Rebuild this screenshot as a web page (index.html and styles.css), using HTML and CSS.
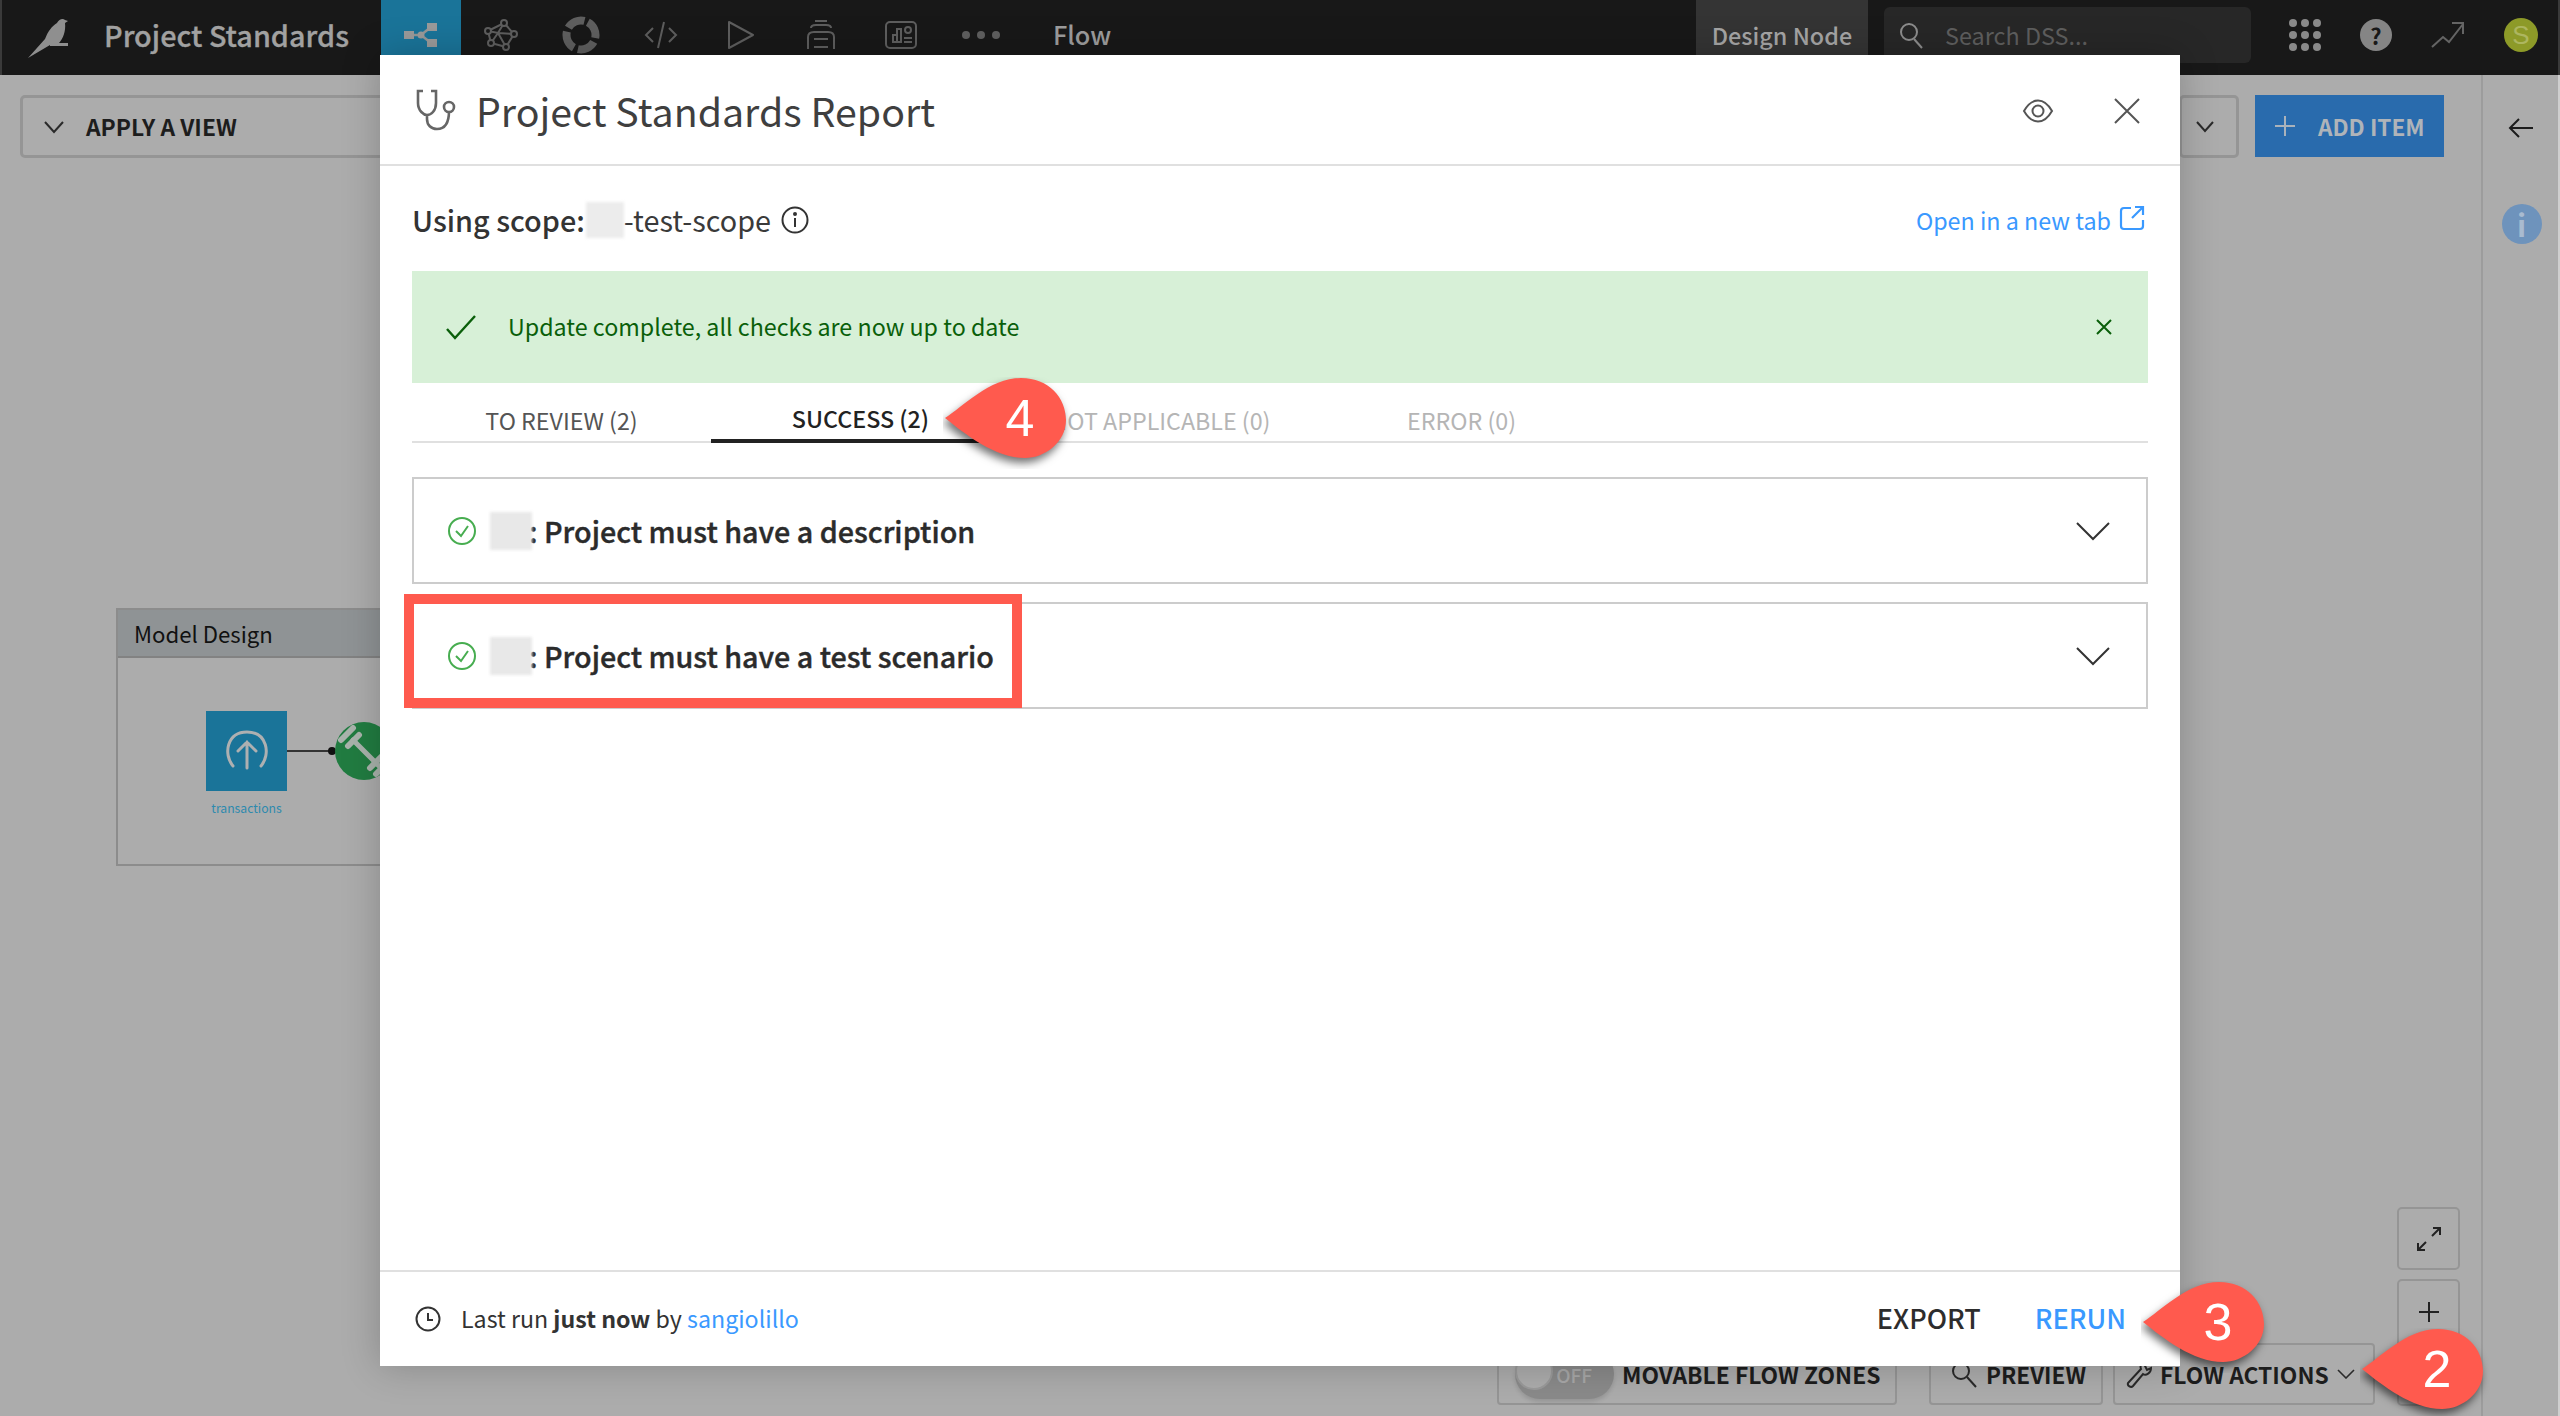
FILE: index.html
```html
<!DOCTYPE html>
<html lang="en">
<head>
<meta charset="utf-8">
<title>Project Standards</title>
<link rel="stylesheet" href="styles.css">
</head>
<body>
<div class="app">
  <header class="topbar">
    <div class="brand">
      <svg class="bird" width="44" height="44" viewBox="0 0 44 44"><path d="M1 42 L18 23 C21 15 25 10 30 7 C32 3 36 2 38 4 L41 5 L38 7 C39 15 36 23 32 27 L23 29 Z" fill="#8f8f8f"/><rect x="23" y="27" width="18" height="3" fill="#8f8f8f"/></svg>
      <span class="project">Project Standards</span>
    </div>
    <nav class="navtabs">
      <div class="navtab navtab-on"><svg width="34" height="26" viewBox="0 0 34 26"><path d="M5 13 H17 L27 5 M17 13 L27 21" stroke="#959595" stroke-width="2.5" fill="none"/><rect x="0" y="9" width="10" height="8" fill="#9a9a9a"/><rect x="23" y="1" width="10" height="8" fill="#9a9a9a"/><rect x="23" y="17" width="10" height="8" fill="#9a9a9a"/><circle cx="17" cy="13" r="3.5" fill="#9a9a9a"/></svg></div>
      <div class="navtab"><svg width="34" height="32" viewBox="0 0 34 32" fill="none" stroke="#5e5e5e" stroke-width="2"><path d="M4 12 L20 4 L30 15 L22 28 L7 24 Z M4 12 L14 14 L20 4 M14 14 L30 15 M14 14 L7 24 M14 14 L22 28"/><circle cx="4" cy="12" r="3" fill="#181818"/><circle cx="20" cy="4" r="3" fill="#181818"/><circle cx="30" cy="15" r="3" fill="#181818"/><circle cx="22" cy="28" r="3" fill="#181818"/><circle cx="7" cy="24" r="3" fill="#181818"/></svg></div>
      <div class="navtab"><svg width="38" height="38" viewBox="0 0 38 38"><circle cx="19" cy="19" r="14.5" fill="none" stroke="#5f5f5f" stroke-width="8" stroke-dasharray="18.5 4.3" transform="rotate(-62 19 19)"/></svg></div>
      <div class="navtab"><svg width="34" height="32" viewBox="0 0 34 32" fill="none" stroke="#5e5e5e" stroke-width="2"><path d="M9 9 L2 16 L9 23 M25 9 L32 16 L25 23 M20 3 L14 29"/></svg></div>
      <div class="navtab"><svg width="28" height="30" viewBox="0 0 28 30" fill="none" stroke="#5e5e5e" stroke-width="2" stroke-linejoin="round"><path d="M2 2 L26 15 L2 28 Z"/></svg></div>
      <div class="navtab"><svg width="30" height="32" viewBox="0 0 30 32" fill="none" stroke="#5e5e5e" stroke-width="2"><path d="M9 2 H21 M5 9 C5 6 8 6 10 6 H20 C22 6 25 6 25 9 M2 30 V18 C2 14 5 13 8 13 H22 C25 13 28 14 28 18 V30 M8 20 H22 M8 28 H22"/></svg></div>
      <div class="navtab"><svg width="34" height="30" viewBox="0 0 34 30" fill="none" stroke="#5e5e5e" stroke-width="2"><rect x="2" y="2" width="30" height="26" rx="4"/><path d="M9 22 V15 H13 V22 Z M13 22 V9 H17 V22 Z"/><circle cx="24" cy="10" r="3"/><path d="M20 18 H28 M20 22 H28"/></svg></div>
      <div class="navtab navdots"><i></i><i></i><i></i></div>
    </nav>
    <span class="crumb">Flow</span>
    <div class="node">Design Node</div>
    <div class="search">
      <svg width="28" height="30" viewBox="0 0 28 30" fill="none" stroke="#8d8d8d" stroke-width="2"><circle cx="11" cy="12" r="8"/><path d="M16 19 L24 28"/></svg>
      <span>Search DSS...</span>
    </div>
    <div class="tools">
      <div class="apps"><i></i><i></i><i></i><i></i><i></i><i></i><i></i><i></i><i></i></div>
      <div class="help">?</div>
      <svg width="34" height="28" viewBox="0 0 34 28" fill="none" stroke="#646464" stroke-width="2"><path d="M1 26 L12 16 L18 21 L32 3 M21 2 H32 V13"/></svg>
      <div class="avatar">S</div>
    </div>
  </header>

  <div class="workspace">
    <main class="main">
      <div class="viewbar">
        <div class="applyview">
          <svg width="22" height="14" viewBox="0 0 22 14" fill="none" stroke="#2a2a2a" stroke-width="2"><path d="M2 2 L11 12 L20 2"/></svg>
          <span>APPLY A VIEW</span>
        </div>
        <div class="viewright">
          <div class="dropdown"><svg width="20" height="12" viewBox="0 0 20 12" fill="none" stroke="#2a2a2a" stroke-width="2"><path d="M2 1 L10 10 L18 1"/></svg></div>
          <div class="additem">
            <svg width="22" height="22" viewBox="0 0 22 22" stroke="#a9b2bb" stroke-width="2"><path d="M11 1 V21 M1 11 H21"/></svg>
            <span>ADD ITEM</span>
          </div>
        </div>
      </div>
      <div class="canvas">
        <section class="zone">
          <div class="zone-head">Model Design</div>
          <div class="dataset">
            <svg width="44" height="42" viewBox="0 0 44 42" fill="none" stroke="#aeb0b1" stroke-width="3" stroke-linecap="round"><path d="M8 36 C-2 24 2 2 22 2 C42 2 46 24 36 36 M22 38 V12 M13 21 L22 12 L31 21"/></svg>
          </div>
          <div class="dataset-name">transactions</div>
          <div class="edge"></div>
          <div class="recipe">
            <svg width="58" height="58" viewBox="0 0 58 58" stroke="#a9b3ac" fill="none" stroke-linecap="round"><path d="M18 18 L44 44" stroke-width="5"/><path d="M6 18 L18 6 M13 24 L24 13 M35 46 L46 35 M41 52 L52 41" stroke-width="6"/><path d="M3 13 L5 11" stroke-width="2"/></svg>
          </div>
        </section>
        <div class="zoom-tools">
          <div class="zoombtn"><svg width="26" height="26" viewBox="0 0 26 26" fill="none" stroke="#222" stroke-width="2"><path d="M16 10 L24 2 M17 2 H24 V9 M10 16 L2 24 M2 17 V24 H9"/></svg></div>
          <div class="zoombtn zoombtn-tall"><svg width="22" height="22" viewBox="0 0 22 22" stroke="#222" stroke-width="2"><path d="M11 1 V21 M1 11 H21"/></svg></div>
        </div>
        <div class="flowbar">
          <div class="flowbtn flowbtn-zones">
            <div class="toggle"><b></b><span>OFF</span></div>
            <span>MOVABLE FLOW ZONES</span>
          </div>
          <div class="flowbtn flowbtn-preview">
            <svg width="26" height="28" viewBox="0 0 26 28" fill="none" stroke="#2a2a2a" stroke-width="2"><circle cx="10" cy="11" r="8"/><path d="M16 17 L25 27"/></svg>
            <span>PREVIEW</span>
          </div>
          <div class="flowbtn flowbtn-actions">
            <svg width="26" height="30" viewBox="0 0 26 30" fill="none" stroke="#2a2a2a" stroke-width="2"><path d="M15 10 C13 5 18 1 24 2 L19 7 L21 11 L25 9 C25 14 20 17 17 15 L7 27 C5 29 1 27 2 24 Z"/></svg>
            <span>FLOW ACTIONS</span>
            <svg width="18" height="10" viewBox="0 0 18 10" fill="none" stroke="#2a2a2a" stroke-width="1.6"><path d="M1 1 L9 9 L17 1"/></svg>
          </div>
        </div>
      </div>
    </main>
    <aside class="sidepanel">
      <svg width="26" height="22" viewBox="0 0 26 22" fill="none" stroke="#1c1c1c" stroke-width="2"><path d="M25 11 H2 M11 2 L2 11 L11 20"/></svg>
      <div class="info">i</div>
    </aside>
  </div>

  <div class="modal">
    <div class="modal-head">
      <svg class="stetho" width="42" height="42" viewBox="0 0 42 42" fill="none" stroke="#666" stroke-width="2.6"><path d="M8 2 H3 V14 C3 22 9 26 12 26 C16 26 21 22 21 14 V2 H16 M12 26 V30 C12 36 16 40 22 40 C30 40 34 34 34 22"/><circle cx="34" cy="18" r="5"/></svg>
      <h1 class="modal-title">Project Standards Report</h1>
      <svg class="eye" width="34" height="24" viewBox="0 0 34 24" fill="none" stroke="#555" stroke-width="2"><path d="M3 12 C7 5 12 1.5 17 1.5 C22 1.5 27 5 31 12 C27 19 22 22.5 17 22.5 C12 22.5 7 19 3 12 Z"/><circle cx="17" cy="12" r="5.5"/></svg>
      <svg class="close" width="28" height="28" viewBox="0 0 28 28" stroke="#555" stroke-width="2"><path d="M2 2 L26 26 M26 2 L2 26"/></svg>
    </div>
    <div class="modal-body">
      <div class="scope">
        <span class="scope-label">Using scope:</span>
        <span class="blur blur-scope"></span>
        <span class="scope-name">-test-scope</span>
        <svg width="28" height="28" viewBox="0 0 28 28" fill="none" stroke="#333" stroke-width="2"><circle cx="14" cy="14" r="12.5"/><path d="M14 12 V21"/><circle cx="14" cy="8" r="1" fill="#333"/></svg>
        <a class="newtab"><span>Open in a new tab</span>
          <svg width="26" height="26" viewBox="0 0 26 26" fill="none" stroke="#3a99ff" stroke-width="2.2"><path d="M12 3 H5 C3 3 2 4 2 6 V21 C2 23 3 24 5 24 H21 C23 24 24 23 24 21 V15 M13 13 L24 2 M16 2 H24 V10"/></svg>
        </a>
      </div>
      <div class="banner">
        <svg width="32" height="26" viewBox="0 0 32 26" fill="none" stroke="#0a5f0a" stroke-width="2.4"><path d="M2 15 L10 24 L30 2"/></svg>
        <span class="banner-text">Update complete, all checks are now up to date</span>
        <svg class="banner-x" width="18" height="18" viewBox="0 0 18 18" stroke="#0a5f0a" stroke-width="2"><path d="M2 2 L16 16 M16 2 L2 16"/></svg>
      </div>
      <div class="tabs">
        <div class="tab tab-plain">TO REVIEW (2)</div>
        <div class="tab tab-on">SUCCESS (2)</div>
        <div class="tab tab-off">NOT APPLICABLE (0)</div>
        <div class="tab tab-off">ERROR (0)</div>
      </div>
      <div class="check">
        <svg width="28" height="28" viewBox="0 0 28 28" fill="none" stroke="#47ad50" stroke-width="2"><circle cx="14" cy="14" r="13"/><path d="M8 14 L13 19 L20 9"/></svg>
        <span class="blur blur-check"></span>
        <span class="check-title">: Project must have a description</span>
        <svg class="check-chev" width="34" height="20" viewBox="0 0 34 20" fill="none" stroke="#333" stroke-width="2"><path d="M1 2 L17 18 L33 2"/></svg>
      </div>
      <div class="check">
        <svg width="28" height="28" viewBox="0 0 28 28" fill="none" stroke="#47ad50" stroke-width="2"><circle cx="14" cy="14" r="13"/><path d="M8 14 L13 19 L20 9"/></svg>
        <span class="blur blur-check"></span>
        <span class="check-title">: Project must have a test scenario</span>
        <svg class="check-chev" width="34" height="20" viewBox="0 0 34 20" fill="none" stroke="#333" stroke-width="2"><path d="M1 2 L17 18 L33 2"/></svg>
      </div>
    </div>
    <div class="modal-foot">
      <svg width="26" height="26" viewBox="0 0 26 26" fill="none" stroke="#333" stroke-width="2"><circle cx="13" cy="13" r="11.5"/><path d="M13 7 V14 H18"/></svg>
      <span class="lastrun">Last run <b>just now</b> by <a>sangiolillo</a></span>
      <span class="foot-btn">EXPORT</span>
      <span class="foot-btn foot-btn-primary">RERUN</span>
    </div>
  </div>

  <div class="highlight"></div>

  <div class="callout callout-4">
    <svg width="130" height="92" viewBox="0 0 130 92"><path class="drop" d="M2 41 C20 30 46 1 78 1 C106 1 123 21 123 43 C123 65 102 81 82 81 C52 81 22 57 2 41 Z"/></svg>
    <span>4</span>
  </div>
  <div class="callout callout-3">
    <svg width="130" height="92" viewBox="0 0 130 92"><path class="drop" d="M2 41 C20 30 46 1 78 1 C106 1 123 21 123 43 C123 65 102 81 82 81 C52 81 22 57 2 41 Z"/></svg>
    <span>3</span>
  </div>
  <div class="callout callout-2">
    <svg width="130" height="92" viewBox="0 0 130 92"><path class="drop" d="M2 41 C20 30 46 1 78 1 C106 1 123 21 123 43 C123 65 102 81 82 81 C52 81 22 57 2 41 Z"/></svg>
    <span>2</span>
  </div>
</div>
</body>
</html>
```

FILE: styles.css
```css
* { box-sizing: border-box; }
html, body { margin: 0; padding: 0; }
body { font-family: "Noto Sans CJK SC", "Noto Sans", sans-serif; color: #2d2d2d; }
.app { position: relative; width: 2560px; height: 1416px; overflow: hidden; background: #acacac; display: flex; flex-direction: column; }
h1 { margin: 0; font: inherit; }
a { text-decoration: none; }

/* top bar */
.topbar { height: 75px; flex: none; background: #181818; display: flex; align-items: flex-start; border-left: 2px solid #3a3a3a; border-right: 2px solid #3a3a3a; }
.brand { width: 379px; height: 75px; display: flex; align-items: center; padding-left: 25px; }
.project { margin-left: 33px; margin-top: -6px; font-size: 28.8px; line-height: 40px; font-weight: 500; color: #a1a1a1; white-space: nowrap; -webkit-text-stroke: .3px #a1a1a1; }
.navtabs { display: flex; }
.navtab { width: 80px; height: 75px; padding-bottom: 5px; display: flex; align-items: center; justify-content: center; }
.navtab-on { background: #1a7499; }
.navdots { gap: 7px; }
.navdots i { width: 8px; height: 8px; border-radius: 50%; background: #5f5f5f; }
.crumb { margin-left: 32px; font-size: 25.3px; line-height: 69px; font-weight: 500; color: #9c9c9c; }
.node { margin-left: auto; width: 172px; height: 75px; background: #343434; color: #a5a5a5; font-size: 23.4px; font-weight: 500; line-height: 70px; text-align: center; }
.search { margin-left: 16px; margin-top: 7px; width: 367px; height: 56px; background: #272727; border-radius: 6px; padding-left: 14px; display: flex; align-items: center; gap: 19px; color: #5e5e5e; font-size: 23.4px; }
.tools { width: 307px; height: 70px; display: flex; align-items: center; padding-left: 38px; }
.apps { width: 32px; display: grid; grid-template-columns: repeat(3, 8px); gap: 4px; }
.apps i { width: 8px; height: 8px; border-radius: 50%; background: #8a8a8a; }
.help { margin-left: 39px; width: 32px; height: 32px; border-radius: 50%; background: #858585; color: #181818; font-size: 22px; font-weight: 700; line-height: 32px; text-align: center; }
.tools svg { margin-left: 39px; }
.avatar { margin-left: 39px; width: 34px; height: 34px; border-radius: 50%; background: #8d9a28; color: #adb660; font-size: 26px; line-height: 34px; text-align: center; font-family: "Liberation Sans", sans-serif; }

/* workspace under the modal */
.workspace { flex: 1; display: flex; min-height: 0; }
.main { flex: 1; display: flex; flex-direction: column; min-width: 0; }
.viewbar { height: 95px; flex: none; display: flex; justify-content: space-between; padding: 20px 37px 13px 20px; }
.applyview { width: 500px; height: 63px; border: 3px solid #959595; border-radius: 5px; display: flex; align-items: center; padding-left: 20px; gap: 21px; font-size: 22.8px; font-weight: 700; color: #1d1d1d; }
.viewright { display: flex; gap: 16px; }
.dropdown { width: 60px; height: 63px; border: 3px solid #959595; border-radius: 5px; display: flex; align-items: center; justify-content: center; padding-right: 8px; }
.additem { width: 189px; height: 62px; background: #296bad; display: flex; align-items: center; padding-left: 19px; gap: 22px; color: #afb4b9; font-size: 22.6px; font-weight: 700; }
.canvas { position: relative; flex: 1; }
.zone { position: absolute; left: 116px; top: 438px; width: 400px; height: 258px; border: 2px solid #8c8c8c; }
.zone-head { height: 48px; background: #8f9395; border-bottom: 2px solid #828282; padding-left: 16px; font-size: 22.2px; line-height: 46px; color: #111; }
.dataset { position: absolute; left: 88px; top: 101px; width: 81px; height: 80px; background: #1a7499; display: flex; align-items: center; justify-content: center; }
.dataset-name { position: absolute; left: 88px; top: 189px; width: 81px; text-align: center; font-size: 12.2px; line-height: 18px; color: #2e8aae; }
.edge { position: absolute; left: 169px; top: 140px; width: 46px; height: 2px; background: #333; }
.edge::after { content: ""; position: absolute; right: -3px; top: -3px; width: 8px; height: 8px; border-radius: 50%; background: #111; }
.recipe { position: absolute; left: 217px; top: 112px; width: 58px; height: 58px; border-radius: 50%; background: #217c41; overflow: hidden; }
.zoom-tools { position: absolute; left: 2397px; top: 1037px; display: flex; flex-direction: column; gap: 9px; }
.zoombtn { width: 63px; height: 63px; border: 2px solid #959595; border-radius: 5px; display: flex; align-items: center; justify-content: center; }
.zoombtn-tall { height: 127px; align-items: flex-start; padding-top: 20px; }
.flowbar { position: absolute; left: 1497px; top: 1173px; display: flex; }
.flowbtn { height: 62px; border: 2px solid #959595; border-radius: 4px; display: flex; align-items: center; font-size: 22.8px; font-weight: 700; color: #1d1d1d; white-space: nowrap; }
.flowbtn-zones { width: 400px; padding-left: 16px; gap: 8px; margin-right: 32px; }
.flowbtn-preview { width: 174px; padding-left: 20px; gap: 9px; margin-right: 10px; font-size: 22.5px; }
.flowbtn-actions { width: 262px; padding-left: 11px; gap: 8px; }
.toggle { position: relative; width: 99px; height: 50px; flex: none; border-radius: 25px; background: #8a8a8a; color: #a8a8a8; font-size: 19px; font-weight: 500; display: flex; align-items: center; justify-content: flex-end; padding-right: 22px; box-shadow: 0 3px 4px rgba(0,0,0,.12); }
.toggle b { position: absolute; left: 0; top: 3px; width: 38px; height: 38px; border-radius: 50%; background: #acacac; border: 2px solid #9a9a9a; }
.sidepanel { width: 79px; flex: none; border-left: 2px solid #9c9c9c; border-right: 2px solid #cfcfcf; display: flex; flex-direction: column; align-items: center; padding-top: 42px; gap: 65px; }
.info { width: 40px; height: 40px; margin-left: 2px; border-radius: 50%; background: #6e93bc; color: #a9bbd0; font-size: 30px; font-weight: 700; line-height: 40px; text-align: center; }

/* modal */
.modal { position: absolute; left: 380px; top: 55px; width: 1800px; height: 1311px; background: #fff; display: flex; flex-direction: column; box-shadow: 0 0 36px rgba(0,0,0,.22); }
.modal-head { height: 111px; flex: none; border-bottom: 2px solid #e0e0e0; display: flex; align-items: center; padding: 2px 39px 0 35px; }
.stetho { flex: none; margin-top: -2px; }
.modal-title { margin-left: 19px; margin-top: -2px; font-size: 39.3px; line-height: 50px; color: #3f3f3f; font-weight: 400; }
.eye { margin-left: auto; }
.close { margin-left: 58px; }
.modal-body { flex: 1; padding: 0 32px; min-height: 0; }
.scope { height: 105px; display: flex; align-items: center; padding-top: 3px; font-size: 28.8px; line-height: 40px; }
.scope-label { font-weight: 500; color: #333; }
.scope-name { color: #3a3a3a; }
.scope > svg { margin-left: 10px; }
.blur { display: block; background: #ececec; filter: blur(1.5px); flex: none; }
.blur-scope { width: 38px; height: 36px; margin-left: 1px; }
.newtab { margin-left: auto; margin-right: 3px; display: flex; align-items: center; gap: 8px; color: #3a99ff; font-size: 23.3px; }
.newtab svg { margin-top: -4px; }
.banner { height: 112px; background: #d7f0d7; display: flex; align-items: center; padding-left: 33px; color: #0a5f0a; font-size: 23.25px; }
.banner-text { margin-left: 31px; margin-top: -2px; }
.banner-x { margin-left: auto; margin-right: 35px; }
.tabs { height: 60px; display: flex; border-bottom: 2px solid #e0e0e0; margin-bottom: 34px; }
.tab { width: 299px; height: 60px; text-align: center; font-size: 23.25px; line-height: 74px; }
.tab-plain { color: #555; }
.tab-on { color: #222; font-weight: 500; line-height: 70px; border-bottom: 4px solid #222; }
.tab-off { width: 301px; color: #b5b5b5; }
.check { height: 107px; border: 2px solid #ccc; display: flex; align-items: center; padding: 0 17px 0 34px; margin-bottom: 18px; }
.blur-check { width: 42px; height: 38px; margin-left: 14px; background: #e8e8e8; }
.check-title { margin-left: -3px; font-size: 28.7px; line-height: 40px; font-weight: 500; color: #2b2b2b; -webkit-text-stroke: .4px #2b2b2b; }
.check-chev { margin-left: auto; margin-right: 19px; }
.modal-foot { height: 96px; flex: none; border-top: 2px solid #e0e0e0; display: flex; align-items: center; padding: 0 54px 0 35px; font-size: 23.2px; color: #333; }
.lastrun { margin-left: 20px; margin-top: -2px; }
.lastrun a { color: #3a99ff; }
.foot-btn { font-size: 27px; font-weight: 500; color: #2d2d2d; margin-top: -4px; }
.lastrun + .foot-btn { margin-left: auto; }
.foot-btn-primary { margin-left: 54px; color: #3a99ff; }

/* annotations */
.highlight { position: absolute; left: 404px; top: 594px; width: 618px; height: 114px; border: 10px solid #ff5a4e; }
.callout { position: absolute; width: 130px; height: 92px; }
.callout svg { display: block; }
.drop { fill: #ff5a4e; filter: drop-shadow(-2px 5px 4px rgba(0,0,0,.55)); }
.callout span { position: absolute; left: 57px; width: 40px; top: 11px; text-align: center; font-family: "Liberation Sans", sans-serif; font-size: 52px; line-height: 60px; color: #fff; }
.callout-4 { left: 943px; top: 377px; }
.callout-3 { left: 2141px; top: 1281px; }
.callout-2 { left: 2360px; top: 1328px; }
```
